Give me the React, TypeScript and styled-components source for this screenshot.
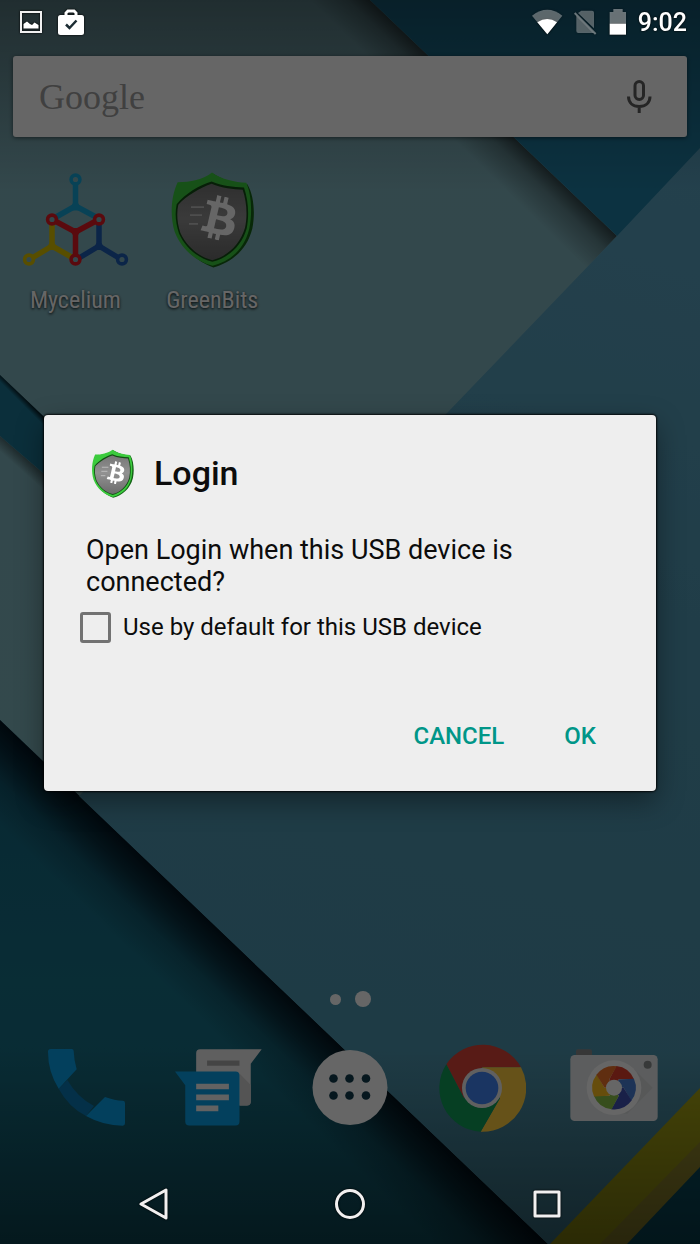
import React from "react";
import styled, { createGlobalStyle, css } from "styled-components";
import { FaBtc } from "react-icons/fa";

const GlobalStyle = createGlobalStyle`
  *, *::before, *::after { box-sizing: border-box; }
  body { margin: 0; background: #0b2a35; font-family: Roboto, "Liberation Sans", sans-serif; }
  button { border: 0; padding: 0; background: none; font: inherit; color: inherit; cursor: pointer; }
`;

const Phone = styled.div`
  position: relative;
  display: flex;
  flex-direction: column;
  min-height: 100vh;
  overflow: hidden;
`;

const WallpaperArt = styled.svg`
  position: absolute;
  inset: 0;
  width: 100%;
  height: 100%;
`;

const StatusBar = styled.header`
  position: relative;
  z-index: 3;
  display: flex;
  align-items: center;
  justify-content: space-between;
  height: 44px;
  padding: 0 13px 0 19px;
  color: #fff;
  filter: drop-shadow(0 0 1px #000);
`;

const StatusGroup = styled.div<{ $gap: number }>`
  display: flex;
  align-items: center;
  gap: ${(p) => p.$gap}px;
`;

const Clock = styled.time`
  padding-top: 2px;
  font-size: 25px;
  line-height: 32px;
  font-weight: 500;
`;

const Home = styled.main`
  position: relative;
  flex: 1;
  display: flex;
  flex-direction: column;
`;

const SearchBar = styled.form`
  display: flex;
  align-items: center;
  height: 81px;
  margin: 12px 13px 0;
  padding: 0 30px 0 26px;
  border-radius: 3px;
  background: #fff;
  box-shadow: 0 1px 4px rgba(0, 0, 0, 0.5);
`;

const SearchLabel = styled.label`
  font-family: "Liberation Serif", serif;
  font-size: 36px;
  line-height: 40px;
  color: #a0a0a0;
`;

const SearchInput = styled.input`
  flex: 1;
  min-width: 0;
  height: 48px;
  border: 0;
  outline: 0;
  background: transparent;
  font-size: 24px;
`;

const MicButton = styled.button`
  display: flex;
`;

const AppGrid = styled.ul`
  display: grid;
  grid-template-columns: repeat(5, 1fr);
  margin: 0;
  padding: 34px 9px 0 7px;
  list-style: none;
`;

const AppButton = styled.button`
  display: flex;
  flex-direction: column;
  align-items: center;
  gap: 18px;
  width: 100%;
`;

const AppLabel = styled.span`
  font-family: "Roboto Condensed", "Liberation Sans Narrow", Roboto, sans-serif;
  font-size: 24px;
  line-height: 28px;
  color: #fff;
  text-shadow: 0 1px 3px #000;
`;

const PageDots = styled.div`
  display: flex;
  align-items: center;
  justify-content: center;
  gap: 14px;
  height: 16px;
  margin-top: auto;
`;

const Dot = styled.span<{ $active?: boolean }>`
  width: ${(p) => (p.$active ? 16 : 11)}px;
  height: ${(p) => (p.$active ? 16 : 11)}px;
  border-radius: 50%;
  background: #fff;
`;

const Dock = styled.nav`
  display: grid;
  grid-template-columns: repeat(5, 1fr);
  justify-items: center;
  padding: 37px 20px 32px;
`;

const DockButton = styled.button`
  display: flex;
`;

const Scrim = styled.div`
  position: absolute;
  inset: 0;
  z-index: 2;
  display: flex;
  align-items: center;
  padding: 44px 44px 82px;
  background: rgba(0, 0, 0, 0.6);
`;

const Dialog = styled.section`
  flex: 1;
  padding: 33px 44px 31px 42px;
  border-radius: 4px;
  background: #eee;
  color: #0c0c0c;
  box-shadow: 0 0 2px 1px rgba(0, 0, 0, 0.85), 0 10px 28px rgba(0, 0, 0, 0.4);
`;

const DialogHeader = styled.div`
  display: flex;
  align-items: center;
  gap: 20px;
  padding-left: 5px;
`;

const Title = styled.h1`
  margin: 0;
  font-size: 34px;
  line-height: 50px;
  font-weight: 500;
`;

const Message = styled.p`
  margin: 36px 0 13px;
  font-size: 27px;
  line-height: 32px;
`;

const DefaultOption = styled.label`
  display: flex;
  align-items: center;
  gap: 12px;
  margin-left: -6px;
  font-size: 24px;
  line-height: 32px;
`;

const CheckBox = styled.input`
  appearance: none;
  width: 31px;
  height: 31px;
  margin: 0;
  border: 3px solid #727272;
  border-radius: 3px;
  &:checked { background: #009688; border-color: #009688; }
`;

const Actions = styled.div`
  display: flex;
  justify-content: flex-end;
  gap: 28px;
  margin-top: 69px;
`;

const ActionButton = styled.button`
  padding: 0 16px;
  color: #009688;
  font-size: 24px;
  line-height: 48px;
  font-weight: 500;
`;

const NavBar = styled.nav`
  position: relative;
  z-index: 3;
  display: grid;
  grid-template-columns: repeat(3, 1fr);
  justify-items: center;
  align-items: center;
  height: 80px;
  padding: 0 55px;
  filter: drop-shadow(0 0 1px #000);
`;

const navIcon = css`
  width: 32px;
  height: 32px;
  fill: none;
  stroke: #f2f0f0;
  stroke-width: 3;
  stroke-linejoin: round;
`;

const NavButton = styled.button`
  display: flex;
  svg { ${navIcon} }
`;

function Wallpaper() {
  return (
    <WallpaperArt viewBox="0 0 700 1244" preserveAspectRatio="none" aria-hidden="true">
      <defs>
        <linearGradient id="paleSheet" x1="0" y1="0" x2="0" y2="1">
          <stop offset="0" stopColor="#80b2bc" />
          <stop offset="1" stopColor="#82b9c1" />
        </linearGradient>
        <linearGradient id="blueSheet" gradientUnits="userSpaceOnUse" x1="680" y1="150" x2="400" y2="1244">
          <stop offset="0" stopColor="#5aa2c0" />
          <stop offset="0.5" stopColor="#5098b2" />
          <stop offset="1" stopColor="#4b92aa" />
        </linearGradient>
        <linearGradient id="deepSheet" gradientUnits="userSpaceOnUse" x1="0" y1="720" x2="0" y2="1244">
          <stop offset="0" stopColor="#14647e" />
          <stop offset="0.5" stopColor="#187086" />
          <stop offset="1" stopColor="#14687c" />
        </linearGradient>
        <linearGradient id="foldShade" gradientUnits="userSpaceOnUse" x1="515" y1="137" x2="484" y2="169">
          <stop offset="0" stopColor="#000" stopOpacity="0.6" />
          <stop offset="0.4" stopColor="#000" stopOpacity="0.26" />
          <stop offset="1" stopColor="#000" stopOpacity="0" />
        </linearGradient>
        <linearGradient id="deepShade" gradientUnits="userSpaceOnUse" x1="389" y1="1092" x2="335" y2="1148">
          <stop offset="0" stopColor="#000812" stopOpacity="0.9" />
          <stop offset="0.3" stopColor="#000812" stopOpacity="0.6" />
          <stop offset="0.6" stopColor="#000812" stopOpacity="0.22" />
          <stop offset="1" stopColor="#000812" stopOpacity="0" />
        </linearGradient>
        <linearGradient id="stripShade" gradientUnits="userSpaceOnUse" x1="22" y1="396" x2="18" y2="400">
          <stop offset="0" stopColor="#000" stopOpacity="0.7" />
          <stop offset="1" stopColor="#000" stopOpacity="0" />
        </linearGradient>
        <linearGradient id="underStripShade" gradientUnits="userSpaceOnUse" x1="22" y1="455" x2="14" y2="464">
          <stop offset="0" stopColor="#000" stopOpacity="0.4" />
          <stop offset="1" stopColor="#000" stopOpacity="0" />
        </linearGradient>
        <linearGradient id="topShade" x1="0" y1="0" x2="0" y2="1">
          <stop offset="0" stopColor="#000" stopOpacity="0.36" />
          <stop offset="1" stopColor="#000" stopOpacity="0" />
        </linearGradient>
        <linearGradient id="bottomShade" x1="0" y1="0" x2="0" y2="1">
          <stop offset="0" stopColor="#000" stopOpacity="0" />
          <stop offset="1" stopColor="#000" stopOpacity="0.4" />
        </linearGradient>
      </defs>
      <rect width="700" height="1244" fill="url(#paleSheet)" />
      <path d="M0 0H370L617 236L450 412H0Z" fill="url(#foldShade)" />
      <path d="M370 0H700V236H617Z" fill="#1f7da2" />
      <path d="M0 436L100 522V620H0Z" fill="url(#underStripShade)" />
      <path d="M0 375L100 470V522L0 436Z" fill="#1d7694" />
      <path d="M0 375L100 470V522L0 436Z" fill="url(#stripShade)" />
      <path d="M0 720L548 1244H0Z" fill="url(#deepSheet)" />
      <path d="M0 720L548 1244H0Z" fill="url(#deepShade)" />
      <path d="M700 148L617 236L79 796L548 1244H700Z" fill="url(#blueSheet)" />
      <path d="M700 1088L550 1244H700Z" fill="#b3b016" />
      <path d="M700 1142L600 1244H700Z" fill="#a89c34" />
      <path d="M700 1167L627 1244H700Z" fill="#0c5a70" />
      <rect width="700" height="190" fill="url(#topShade)" />
      <rect y="1050" width="700" height="194" fill="url(#bottomShade)" />
    </WallpaperArt>
  );
}

function Shield({ width, height }: { width: number; height: number }) {
  return (
    <svg width={width} height={height} viewBox="510 33 252 290" aria-hidden="true">
      <defs>
        <linearGradient id="steel" x1="0" y1="0" x2="0" y2="1">
          <stop offset="0" stopColor="#767676" />
          <stop offset="0.45" stopColor="#929292" />
          <stop offset="1" stopColor="#6b6b6b" />
        </linearGradient>
      </defs>
      <path d="M640 41C612 62 574 70 539 70C520 110 516 170 530 215C550 270 594 305 640 322C694 307 741 270 757 205C766 160 762 105 742 72C708 70 668 60 640 41Z" fill="#146416" />
      <path d="M636 37C610 58 570 66 533 66C512 110 510 170 524 215C545 270 590 305 638 317C690 303 732 270 748 205C757 160 755 105 739 68C705 66 665 58 636 37Z" fill="#3bcb3d" />
      <path d="M635 64C600 74 556 100 530 132C524 160 527 190 537 220C557 264 593 293 637 305C688 292 726 255 740 205C748 165 745 120 732 82C700 80 665 78 635 64Z" fill="#124d14" />
      <path d="M635 71C603 82 560 106 535 134C529 160 532 190 541 218C560 260 595 289 637 300C684 288 721 252 735 203C743 165 740 124 728 89C700 87 665 85 635 71Z" fill="url(#steel)" />
      <path d="M573 141H612M570 165H606M567 191H594" stroke="#c4c4c4" strokeWidth="5" />
      <g transform="rotate(13 660 174)">
        <FaBtc x={594} y={108} size={132} color="#fff" />
      </g>
    </svg>
  );
}

function Mycelium() {
  return (
    <svg width="108" height="97" viewBox="21 171 108 97" fill="none" strokeWidth="5.500" strokeLinejoin="round" aria-hidden="true">
      <g stroke="#16a6d8"><path d="M75.500 183V206L56 217M75.500 206L96 217" /><path d="M69 210L75.500 200L82 210Z" fill="#16a6d8" strokeWidth="1" /></g>
      <g stroke="#dcc400"><path d="M52 223V246L32 258M52 246L73 258" /><path d="M46 249.500L52 240L58 249.500Z" fill="#dcc400" strokeWidth="1" /></g>
      <g stroke="#1d5cb4"><path d="M99 223V246L79 258M99 246L119 258" /><path d="M93 249.500L99 240L105 249.500Z" fill="#1d5cb4" strokeWidth="1" /></g>
      <g stroke="#e21b23"><path d="M55 221L75.500 232L96 221M75.500 232V256" /><path d="M69 228.500L75.500 238L82 228.500Z" fill="#e21b23" strokeWidth="1" /></g>
      <g strokeWidth="3.600" fill="#80b2bc">
        <circle cx="75.500" cy="179.500" r="4.400" stroke="#16a6d8" />
        <circle cx="29" cy="259.500" r="4.400" stroke="#dcc400" />
        <circle cx="122" cy="259.500" r="4.400" stroke="#1d5cb4" />
        <circle cx="52" cy="219.500" r="4.400" stroke="#e21b23" />
        <circle cx="99" cy="219.500" r="4.400" stroke="#e21b23" />
        <circle cx="75.500" cy="259.500" r="4.400" stroke="#e21b23" />
      </g>
    </svg>
  );
}

const PhoneIcon = () => (
  <svg width="88" height="88" viewBox="126 252 264 264" aria-hidden="true">
    <path d="M202 360Q232 412 282 438L258 468Q205 440 176 386Z" fill="#0a78b4" />
    <path d="M152 267H215Q221 267 221 273Q222 300 230 328L176 386Q144 335 144 275Q144 267 152 267Z" fill="#08a0e8" />
    <path d="M315 411Q345 422 368 422Q375 422 375 429V490Q375 497 368 497Q310 497 258 468Z" fill="#08a0e8" />
  </svg>
);

const MessengerIcon = () => (
  <svg width="88" height="88" viewBox="522 252 266 264" aria-hidden="true">
    <path d="M601 267H787L754 311V425Q754 437 742 437H589V279Q589 267 601 267Z" fill="#eee" />
    <path d="M720 340L754 375V425Q754 437 742 437H720Z" fill="#d2d2d2" />
    <path d="M622 301H720V317H622Z" fill="#aaa" />
    <path d="M525 334H708Q720 334 720 346V485Q720 497 708 497H568Q556 497 556 485V376Z" fill="#08a0e8" />
    <path d="M589 371H688V388H589ZM589 404H688V421H589ZM589 437H656V454H589Z" fill="#f4f4f4" />
  </svg>
);

const DrawerIcon = () => (
  <svg width="88" height="88" viewBox="0 0 88 88" aria-hidden="true">
    <circle cx="44" cy="43.500" r="37.500" fill="#fff" />
    <g fill="#103a4c">
      {[34.5, 51.5].map((y) => [27.5, 43.5, 60].map((x) => <circle key={`${x}-${y}`} cx={x} cy={y} r="4.300" />))}
    </g>
  </svg>
);

const ChromeIcon = () => (
  <svg width="88" height="88" viewBox="-132 -132 264 264" aria-hidden="true">
    <path d="M-107 -71A131 131 0 0 1 117 -62H0L-54 31Z" fill="#db4437" />
    <path d="M117 -62A131 131 0 0 1 -4 131L54 31L0 -62Z" fill="#ffcd40" />
    <path d="M-4 131A131 131 0 0 1 -107 -71L-54 31H54Z" fill="#0f9d58" />
    <circle r="60" fill="#f1f1f1" />
    <circle r="49" fill="#4285f4" />
  </svg>
);

const BLADES = ["#e0402c", "#4a80d8", "#3f51b5", "#8bc34a", "#ffc020", "#f0742a"];

const CameraIcon = () => (
  <svg width="88" height="88" viewBox="-132 -131 264 264" aria-hidden="true">
    <path d="M-114 -96V-109Q-114 -115 -108 -115H-72Q-66 -115 -66 -109V-96Z" fill="#8a8a8a" />
    <rect x="-131" y="-98" width="262" height="198" rx="13" fill="#e6e9ea" />
    <path d="M60 -56L116 0L40 78L-40 74Z" fill="#d9dcdd" />
    <circle cx="101" cy="-69" r="12" fill="#8a8e90" />
    <circle r="82" fill="#fff" />
    {BLADES.map((color, i) => (
      <path key={color} d="M7 -65A65 65 0 0 1 60 -25H14L0 0L-14 -25Z" fill={color} transform={`rotate(${i * 60})`} />
    ))}
    <circle r="24" fill="#fff" />
  </svg>
);

const MicIcon = () => (
  <svg width="36" height="36" viewBox="0 0 36 36" fill="none" stroke="#5c5c5c" strokeWidth="3" aria-hidden="true">
    <rect x="14" y="2.500" width="8.500" height="18" rx="4.250" />
    <path d="M7.500 17.500C7.500 24 12 27.500 18.200 27.500S29 24 29 17.500M18.200 27.500V34" />
  </svg>
);

const PictureIcon = () => (
  <svg width="24" height="24" viewBox="0 0 24 24" aria-hidden="true">
    <rect x="2" y="2" width="20" height="20" fill="none" stroke="#f0f0f0" strokeWidth="2" />
    <path d="M4.500 18.500V14L8 11.500L11 14L13 15L15.500 12.500L19.500 15V18.500Z" fill="#fff" />
  </svg>
);

const BagIcon = () => (
  <svg width="28" height="28" viewBox="0 0 28 28" aria-hidden="true">
    <path d="M9 8V5L11 3H17L19 5V8" fill="none" stroke="#fff" strokeWidth="3" />
    <rect x="1" y="7" width="26" height="20" rx="2.500" fill="#fff" />
    <path d="M9 16.500L12.500 20L19.500 12.500" fill="none" stroke="#1c2c33" strokeWidth="2.500" />
  </svg>
);

const WifiIcon = () => (
  <svg width="32" height="28" viewBox="545 20 96 84" aria-hidden="true">
    <path d="M548 43Q594 8 639 43L594 99Z" fill="#fff" fillOpacity="0.35" />
    <path d="M564 63Q594 43 623 63L594 99Z" fill="#fff" />
  </svg>
);

const NoSimIcon = () => (
  <svg width="24" height="28" viewBox="670 22 72 84" aria-hidden="true">
    <path d="M692 30H724Q730 30 730 36V83L682 37ZM677 45L729 97H683Q677 97 677 91Z" fill="#fff" fillOpacity="0.32" />
    <path d="M672 37L735 100" stroke="#fff" strokeOpacity="0.4" strokeWidth="6" />
  </svg>
);

const BatteryIcon = () => (
  <svg width="18" height="28" viewBox="781 22 54 84" aria-hidden="true">
    <path d="M783 34H794V25H822V34H832V69H783Z" fill="#fff" fillOpacity="0.4" />
    <path d="M783 69H832V102H783Z" fill="#fff" />
  </svg>
);

const DOCK = [
  { name: "Phone", Icon: PhoneIcon },
  { name: "Messenger", Icon: MessengerIcon },
  { name: "All apps", Icon: DrawerIcon },
  { name: "Chrome", Icon: ChromeIcon },
  { name: "Camera", Icon: CameraIcon },
];

export default function App() {
  return (
    <Phone>
      <GlobalStyle />
      <Wallpaper />
      <StatusBar>
        <StatusGroup $gap={14}>
          <PictureIcon />
          <BagIcon />
        </StatusGroup>
        <StatusGroup $gap={11}>
          <WifiIcon />
          <NoSimIcon />
          <BatteryIcon />
          <Clock>9:02</Clock>
        </StatusGroup>
      </StatusBar>
      <Home>
        <SearchBar role="search">
          <SearchLabel htmlFor="search">Google</SearchLabel>
          <SearchInput id="search" type="text" />
          <MicButton type="button" aria-label="Voice search"><MicIcon /></MicButton>
        </SearchBar>
        <AppGrid>
          <li><AppButton type="button"><Mycelium /><AppLabel>Mycelium</AppLabel></AppButton></li>
          <li><AppButton type="button"><Shield width={84} height={97} /><AppLabel>GreenBits</AppLabel></AppButton></li>
        </AppGrid>
        <PageDots>
          <Dot />
          <Dot $active />
        </PageDots>
        <Dock aria-label="Favourites">
          {DOCK.map(({ name, Icon }) => (
            <DockButton key={name} type="button" aria-label={name}><Icon /></DockButton>
          ))}
        </Dock>
      </Home>
      <Scrim>
        <Dialog role="dialog" aria-modal="true" aria-labelledby="dialog-title">
          <DialogHeader>
            <Shield width={43} height={49} />
            <Title id="dialog-title">Login</Title>
          </DialogHeader>
          <Message>Open Login when this USB device is connected?</Message>
          <DefaultOption>
            <CheckBox type="checkbox" />
            Use by default for this USB device
          </DefaultOption>
          <Actions>
            <ActionButton type="button">CANCEL</ActionButton>
            <ActionButton type="button">OK</ActionButton>
          </Actions>
        </Dialog>
      </Scrim>
      <NavBar aria-label="System">
        <NavButton type="button" aria-label="Back">
          <svg viewBox="0 0 32 32"><path d="M4 16L29 2V30Z" /></svg>
        </NavButton>
        <NavButton type="button" aria-label="Home">
          <svg viewBox="0 0 32 32"><circle cx="16" cy="16" r="13.500" /></svg>
        </NavButton>
        <NavButton type="button" aria-label="Recent apps">
          <svg viewBox="0 0 32 32"><rect x="4" y="4" width="24" height="24" /></svg>
        </NavButton>
      </NavBar>
    </Phone>
  );
}
